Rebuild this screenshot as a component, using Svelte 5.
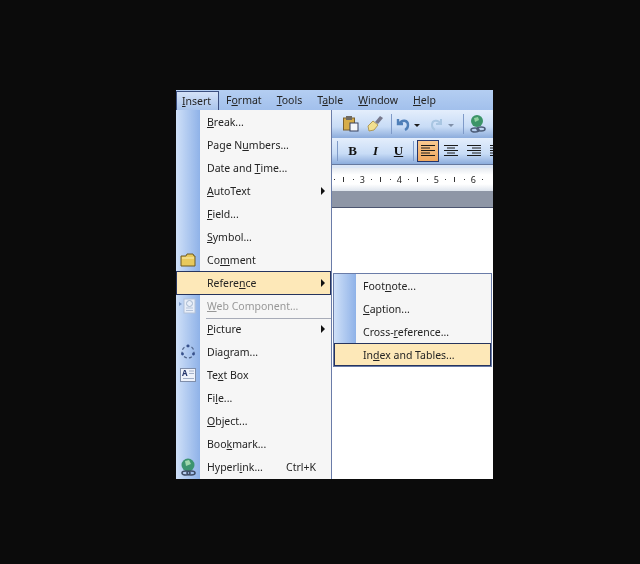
<script>
    const menubar = [
        { pre: "", key: "I", post: "nsert" },
        { pre: "F", key: "o", post: "rmat" },
        { pre: "", key: "T", post: "ools" },
        { pre: "T", key: "a", post: "ble" },
        { pre: "", key: "W", post: "indow" },
        { pre: "", key: "H", post: "elp" }
    ];

    const items = [
        { pre: "", key: "B", post: "reak..." },
        { pre: "Page N", key: "u", post: "mbers..." },
        { pre: "Date and ", key: "T", post: "ime..." },
        { pre: "", key: "A", post: "utoText", arrow: true },
        { pre: "", key: "F", post: "ield..." },
        { pre: "", key: "S", post: "ymbol..." },
        { pre: "Co", key: "m", post: "ment", icon: "folder" },
        { pre: "Refere", key: "n", post: "ce", arrow: true, active: true },
        { pre: "", key: "W", post: "eb Component...", disabled: true, icon: "web" },
        { pre: "", key: "P", post: "icture", arrow: true, line: true },
        { pre: "Dia", key: "g", post: "ram...", icon: "diagram" },
        { pre: "Te", key: "x", post: "t Box", icon: "textbox" },
        { pre: "Fi", key: "l", post: "e..." },
        { pre: "", key: "O", post: "bject..." },
        { pre: "Boo", key: "k", post: "mark..." },
        { pre: "Hyperl", key: "i", post: "nk...", short: "Ctrl+K", icon: "globe" }
    ];

    const subItems = [
        { pre: "Foot", key: "n", post: "ote..." },
        { pre: "", key: "C", post: "aption..." },
        { pre: "Cross-", key: "r", post: "eference..." },
        { pre: "In", key: "d", post: "ex and Tables...", active: true }
    ];

    // one cell per quarter inch, the numbers sit on every fourth
    const rulerCells = [".", "|", ".", "3", ".", "|", ".", "4", ".", "|", ".", "5", ".", "|", ".", "6", "."];
</script>

<div class="page">
    <div class="window">
        <div class="menubar">
            {#each menubar as m, i}
                <span class="top" class:open={i === 0}>{m.pre}<u>{m.key}</u>{m.post}</span>
            {/each}
        </div>

        <div class="bars">
            <div class="toolbar">
                <svg class="tb" width="18" height="18" viewBox="0 0 18 18">
                    <rect x="1.500" y="3" width="11" height="12" fill="#d6ad4a" stroke="#7a6130" />
                    <rect x="4" y="1" width="6" height="4" fill="#6f6a62" />
                    <rect x="8" y="8" width="8" height="8" fill="#f4f6fa" stroke="#36405e" />
                </svg>
                <svg class="tb" width="18" height="18" viewBox="0 0 18 18">
                    <path d="M3 16 L2 11 L7 6 L12 10 L8 15 Z" fill="#f2e090" stroke="#b09a58" />
                    <path d="M9 7 L14 1 L17 3 L12 9 Z" fill="#77788c" />
                </svg>
                <i class="sep"></i>
                <svg class="tb small" width="16" height="16" viewBox="0 0 16 16">
                    <path d="M2 3 L2 8 L7 8 M3 8 C6 3 12 4 12 9 C12 11 11 13 9 14" fill="none" stroke="#4f7fb8" stroke-width="2.4" />
                </svg>
                <span class="drop"></span>
                <svg class="tb small" width="16" height="16" viewBox="0 0 16 16">
                    <path d="M13 3 L13 8 L8 8 M13 8 C10 3 4 4 4 9 C4 11 5 13 7 14" fill="none" stroke="#a9c6e2" stroke-width="2" />
                </svg>
                <span class="drop pale"></span>
                <i class="sep"></i>
                <svg class="tb" width="20" height="20" viewBox="0 0 20 20">
                    <circle cx="9" cy="7" r="6" fill="#3c9468" />
                    <path d="M6 4 L10 3 L11 6 L7 8 Z" fill="#8fd0a0" />
                    <ellipse cx="7" cy="16" rx="4" ry="2" fill="none" stroke="#4c5c78" stroke-width="1.6" />
                    <ellipse cx="13" cy="15" rx="4" ry="2" fill="none" stroke="#4c5c78" stroke-width="1.6" />
                </svg>
            </div>

            <div class="toolbar second">
                <i class="sep"></i>
                <b class="fmt">B</b>
                <em class="fmt">I</em>
                <u class="fmt">U</u>
                <i class="sep"></i>
                <span class="align on">
                    <svg width="14" height="12" viewBox="0 0 14 12"><path d="M0 .5H14M0 3H9M0 5.500H14M0 8H9M0 10.500H14" stroke="#1a1a1a" /></svg>
                </span>
                <span class="align">
                    <svg width="14" height="12" viewBox="0 0 14 12"><path d="M0 .5H14M3 3H11M0 5.500H14M3 8H11M0 10.500H14" stroke="#1a1a1a" /></svg>
                </span>
                <span class="align">
                    <svg width="14" height="12" viewBox="0 0 14 12"><path d="M0 .5H14M5 3H14M0 5.500H14M5 8H14M0 10.500H14" stroke="#1a1a1a" /></svg>
                </span>
                <span class="align">
                    <svg width="14" height="12" viewBox="0 0 14 12"><path d="M0 .5H14M0 3H14M0 5.500H14M0 8H14M0 10.500H14" stroke="#1a1a1a" /></svg>
                </span>
            </div>

            <div class="ruler">
                {#each rulerCells as c}
                    <span class="cell">
                        {#if c === "."}
                            <i class="dot"></i>
                        {:else if c === "|"}
                            <i class="mark"></i>
                        {:else}
                            {c}
                        {/if}
                    </span>
                {/each}
            </div>
            <div class="greybar"></div>
        </div>

        <div class="doc"></div>

        <div class="menu main">
            {#each items as it}
                <div class="item" class:active={it.active} class:disabled={it.disabled} class:line={it.line}>
                    <span class="gutter">
                        {#if it.icon === "folder"}
                            <svg width="16" height="14" viewBox="0 0 16 14">
                                <path d="M1 3 L6 3 L7 1 L13 1 L14 3 L15 3 L15 13 L1 13 Z" fill="#e8c95c" stroke="#6e5a20" />
                                <path d="M2 5H14" stroke="#fbeeb0" />
                            </svg>
                        {:else if it.icon === "web"}
                            <svg width="18" height="16" viewBox="0 0 18 16">
                                <rect x="5" y="1" width="11" height="14" fill="#e8eef8" stroke="#b4c2d8" />
                                <circle cx="10.500" cy="5.500" r="3" fill="none" stroke="#a4b6ce" />
                                <path d="M7 10H14M7 12.500H14" stroke="#b4c2d8" />
                                <path d="M0 4L3 6L0 8Z" fill="#7f9cc8" />
                            </svg>
                        {:else if it.icon === "diagram"}
                            <svg width="16" height="16" viewBox="0 0 16 16">
                                <circle cx="8" cy="8" r="6" fill="none" stroke="#50648a" stroke-width="1.2" stroke-dasharray="3 2.200" />
                                <circle cx="8" cy="2" r="1.400" fill="#36508c" />
                                <circle cx="2.500" cy="10" r="1.400" fill="#36508c" />
                                <circle cx="13.500" cy="10" r="1.400" fill="#36508c" />
                            </svg>
                        {:else if it.icon === "textbox"}
                            <svg width="16" height="14" viewBox="0 0 16 14">
                                <rect x=".5" y=".5" width="15" height="13" fill="#eef2fa" stroke="#7f8eaa" />
                                <text x="2" y="8" class="mini">A</text>
                                <path d="M9 3H14M9 5.500H14M3 10.500H14" stroke="#a4b0c8" />
                            </svg>
                        {:else if it.icon === "globe"}
                            <svg width="18" height="18" viewBox="0 0 18 18">
                                <circle cx="9" cy="7" r="6.500" fill="#3c9470" />
                                <path d="M6 3 L10 2 L12 6 L7 8 Z" fill="#9ed8ac" />
                                <ellipse cx="7" cy="15" rx="4" ry="2" fill="none" stroke="#3e4c66" stroke-width="1.600" />
                                <ellipse cx="12" cy="15" rx="4" ry="2" fill="none" stroke="#3e4c66" stroke-width="1.600" />
                            </svg>
                        {/if}
                    </span>
                    <span class="label">{it.pre}<u>{it.key}</u>{it.post}</span>
                    {#if it.short}<span class="short">{it.short}</span>{/if}
                    {#if it.arrow}<span class="arrow"></span>{/if}
                </div>
            {/each}
        </div>

        <div class="menu sub">
            {#each subItems as it}
                <div class="item" class:active={it.active}>
                    <span class="gutter"></span>
                    <span class="label">{it.pre}<u>{it.key}</u>{it.post}</span>
                </div>
            {/each}
        </div>
    </div>
</div>

<style>
    :global(body) {
        margin: 0;
        background: #0b0b0b;
    }

    .page {
        height: 564px;
        padding: 90px 0 0 176px;
        box-sizing: border-box;
        background: #0b0b0b;
        font-family: "Noto Sans", "Liberation Sans", sans-serif;
        font-size: 10.5px;
        color: #242424;
    }

    .window {
        position: relative;
        width: 317px;
        height: 389px;
        display: flex;
        flex-direction: column;
        background: #fff;
        overflow: hidden;
        filter: blur(0.35px);
    }

    u {
        text-underline-offset: 1px;
    }

    .menubar {
        flex: none;
        height: 20px;
        display: flex;
        align-items: center;
        padding-top: 1px;
        background: linear-gradient(#b4cef2, #a2c0ec);
        box-sizing: border-box;
    }

    .top {
        height: 19px;
        line-height: 19px;
        padding: 0 8px 0 7px;
    }

    .top.open {
        background: linear-gradient(#d4e2f8, #a9c4ec);
        border: 1px solid #3b4f80;
        border-bottom: none;
        box-sizing: border-box;
        width: 43px;
        padding: 0 0 0 5px;
    }

    .bars {
        flex: none;
        display: flex;
        flex-direction: column;
        background: #dce6f6;
    }

    .toolbar {
        height: 28px;
        display: flex;
        align-items: center;
        padding-left: 166px;
        background: linear-gradient(#e4eefc, #c8dcf6 60%, #8cacdc);
        box-sizing: border-box;
    }

    .toolbar.second {
        padding-left: 161px;
        border-bottom: 1px solid #66799f;
        height: 27px;
        margin-bottom: 3px;
    }

    .tb {
        flex: none;
        margin-right: 6px;
    }

    .tb.small {
        margin-right: 1px;
    }

    .sep {
        width: 1px;
        height: 20px;
        background: #7f9ac8;
        margin: 0 4px 0 1px;
        flex: none;
    }

    .second .sep {
        margin: 0 3px 0 0;
    }

    .second .fmt + .sep {
        margin-left: 3px;
    }

    .drop {
        width: 0;
        height: 0;
        border: 3px solid transparent;
        border-top: 3px solid #1c1c1c;
        border-bottom: 0;
        margin: 3px 8px 0 1px;
    }

    .drop.pale {
        border-top-color: #7f8fa8;
        margin: 3px 8px 0 3px;
    }

    .fmt {
        width: 23px;
        text-align: center;
        font-family: "Liberation Serif", serif;
        font-size: 13px;
        font-weight: bold;
        font-style: normal;
        color: #111;
        flex: none;
    }

    em.fmt {
        font-style: italic;
    }

    .align {
        flex: none;
        width: 22px;
        height: 22px;
        display: flex;
        align-items: center;
        justify-content: center;
        box-sizing: border-box;
        margin-right: 1px;
    }

    .align.on {
        background: linear-gradient(#f8c890, #f0a860);
        border: 1px solid #24346a;
    }

    .ruler {
        height: 23px;
        display: flex;
        align-items: center;
        padding-left: 154px;
        background: linear-gradient(#e6eaf0, #fff 30%, #fff 70%, #dfe5ee);
        font-size: 9px;
        overflow: hidden;
    }

    .cell {
        flex: none;
        width: 9.25px;
        display: flex;
        justify-content: center;
        align-items: center;
    }

    .dot {
        width: 1px;
        height: 1px;
        background: #333;
    }

    .mark {
        width: 1px;
        height: 5px;
        background: #333;
    }

    .greybar {
        height: 16px;
        background: #8e96a6;
        border-bottom: 1px solid #4c5570;
    }

    .doc {
        flex: 1;
        background: #fff;
    }

    .menu {
        position: absolute;
        box-sizing: border-box;
        display: flex;
        flex-direction: column;
        background: #f6f6f6;
    }

    .main {
        left: 0;
        top: 20px;
        width: 156px;
        height: 369px;
        border-right: 1px solid #6a7ca8;
    }

    .sub {
        left: 157px;
        top: 183px;
        width: 159px;
        height: 94px;
        border: 1px solid #6a7ca8;
    }

    .item {
        flex: 1 1 0;
        display: flex;
        align-items: center;
        position: relative;
        min-height: 0;
    }

    .gutter {
        flex: none;
        align-self: stretch;
        width: 24px;
        display: flex;
        align-items: center;
        justify-content: center;
        background: linear-gradient(90deg, #cfe0f8, #8fb2e8);
    }

    .sub .gutter {
        width: 22px;
        margin-right: 7px;
    }

    .label {
        margin-left: 7px;
    }

    .sub .label {
        margin-left: 0;
    }

    .short {
        position: absolute;
        left: 110px;
    }

    .arrow {
        position: absolute;
        right: 6px;
        width: 0;
        height: 0;
        border: 4px solid transparent;
        border-left: 4px solid #111;
        border-right: 0;
    }

    .item.line::before {
        content: "";
        position: absolute;
        left: 30px;
        right: 0;
        top: 0;
        height: 1px;
        background: #a8acb8;
    }

    .item.active {
        background: #fde8b8;
        outline: 1px solid #26345e;
        outline-offset: -1px;
    }

    .item.active .gutter {
        background: none;
    }

    .disabled {
        color: #989898;
    }

    .mini {
        font-size: 8px;
        font-weight: bold;
        fill: #24346a;
    }
</style>
